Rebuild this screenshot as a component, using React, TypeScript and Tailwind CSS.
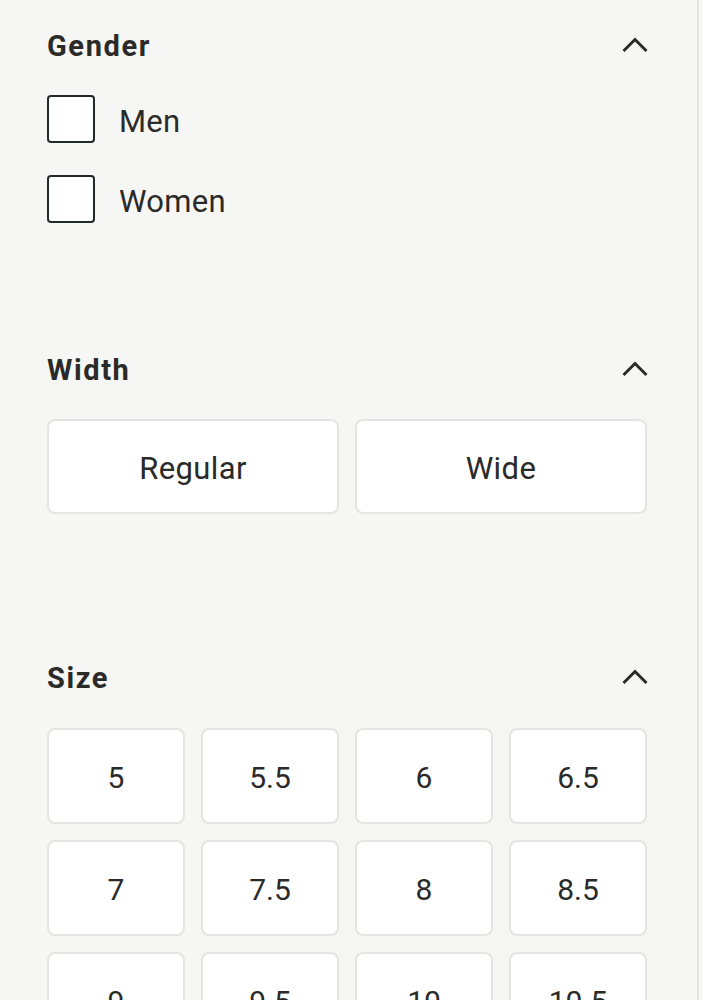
import React from "react";

const Chevron = () => (
  <svg width="26" height="16" viewBox="0 0 26 16" fill="none" className="shrink-0">
    <path d="M1.5 14L13 2.5L24.5 14" stroke="#2a2a28" strokeWidth="3" />
  </svg>
);

const Heading = ({ title }: { title: string }) => (
  <div className="flex h-[48px] items-center justify-between">
    <h2 className="translate-y-[1px] text-[29px] font-bold tracking-[1.6px] text-[#2a2a28]">{title}</h2>
    <div className="mr-[-1px] pb-[2px]">
      <Chevron />
    </div>
  </div>
);

const Checkbox = ({ label }: { label: string }) => (
  <label className="flex h-[48px] items-center gap-[24px]">
    <span className="block h-[48px] w-[48px] rounded-[4px] border-2 border-[#1f2b2a] bg-white" />
    <span className="translate-y-[3px] text-[31px] tracking-[0.3px] text-[#2a2a28]">{label}</span>
  </label>
);

const sizes = ["5", "5.5", "6", "6.5", "7", "7.5", "8", "8.5", "9", "9.5", "10", "10.5"];

export default function App() {
  return (
    <div
      className="flex h-[1000px] w-[703px] overflow-hidden bg-[#f6f6f4]"
      style={{ fontFamily: "Roboto, 'Noto Sans', sans-serif" }}
    >
      <div className="w-[697px] shrink-0 pl-[47px] pr-[50px] pt-[22px]">
        <section>
          <Heading title="Gender" />
          <div className="mt-[25px] flex flex-col gap-[32px]">
            <Checkbox label="Men" />
            <Checkbox label="Women" />
          </div>
        </section>
        <section className="mt-[123px]">
          <Heading title="Width" />
          <div className="mt-[25px] grid grid-cols-2 gap-[16px]">
            {["Regular", "Wide"].map((w) => (
              <button
                key={w}
                className="flex h-[95px] items-center justify-center rounded-[8px] border-2 border-[#e4e4e2] bg-white text-[#2a2a28]"
              >
                <span className="translate-y-[3px] text-[31px] tracking-[0.4px]">{w}</span>
              </button>
            ))}
          </div>
        </section>
        <section className="mt-[140px]">
          <Heading title="Size" />
          <div className="mt-[26px] grid grid-cols-4 gap-[16px]">
            {sizes.map((s) => (
              <button
                key={s}
                className="flex h-[96px] items-center justify-center rounded-[8px] border-2 border-[#e4e4e2] bg-white text-[#2a2a28]"
              >
                <span className="translate-y-[1px] text-[30px]">{s}</span>
              </button>
            ))}
          </div>
        </section>
      </div>
      <div className="w-[2px] shrink-0 bg-[#e4e4e2]" />
    </div>
  );
}
